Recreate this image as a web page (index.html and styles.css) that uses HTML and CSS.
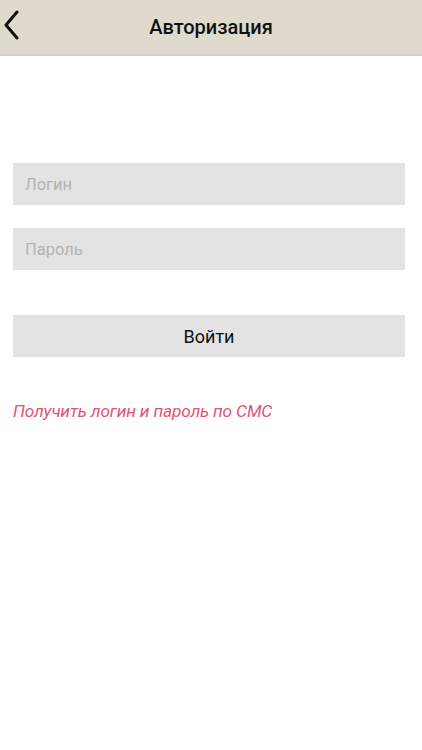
FILE: index.html
```html
<!DOCTYPE html>
<html lang="ru">
<head>
<meta charset="utf-8">
<title>Авторизация</title>
<link rel="stylesheet" href="styles.css">
</head>
<body>
<header class="topbar">
  <button class="back" aria-label="Назад">
    <svg width="16" height="30" viewBox="0 0 16 30"><path d="M14 2 L3 15 L14 28" fill="none" stroke="#111" stroke-width="3" stroke-linecap="round" stroke-linejoin="round"/></svg>
  </button>
  <h1 class="title">Авторизация</h1>
</header>
<main class="content">
  <div class="fields">
    <input class="field" type="text" placeholder="Логин">
    <input class="field" type="password" placeholder="Пароль">
  </div>
  <button class="login">Войти</button>
  <a class="sms" href="#">Получить логин и пароль по СМС</a>
</main>
</body>
</html>
```
FILE: styles.css
```css
html, body {
  margin: 0;
  padding: 0;
  background: #ffffff;
  font-family: Roboto, "Liberation Sans", sans-serif;
}
.topbar {
  height: 54px;
  background: #e0dacd;
  border-bottom: 2px solid #cfcdc8;
  display: flex;
  align-items: center;
  justify-content: center;
  position: relative;
}
.back {
  position: absolute;
  left: 3px;
  top: 10px;
  background: none;
  border: 0;
  padding: 0;
  display: flex;
}
.title {
  margin: 0;
  font-size: 20px;
  font-weight: 500;
  color: #111;
}
.content {
  padding: 107px 17px 0 13px;
  display: flex;
  flex-direction: column;
}
.fields {
  display: flex;
  flex-direction: column;
  gap: 23px;
}
.field {
  height: 42px;
  box-sizing: border-box;
  border: 0;
  background: #e3e3e3;
  padding: 0 12px;
  font-family: Roboto, "Liberation Sans", sans-serif;
  font-size: 16.5px;
  color: #333;
  outline: none;
  margin: 0;
}
.field::placeholder {
  color: #b3b3b3;
}
.login {
  margin-top: 45px;
  height: 42px;
  border: 0;
  background: #e3e3e3;
  font-family: Roboto, "Liberation Sans", sans-serif;
  font-size: 18px;
  color: #111;
  padding: 0;
}
.sms {
  margin-top: 44px;
  font-size: 17.3px;
  letter-spacing: -0.15px;
  font-style: italic;
  color: #e05478;
  text-decoration: none;
}
```
